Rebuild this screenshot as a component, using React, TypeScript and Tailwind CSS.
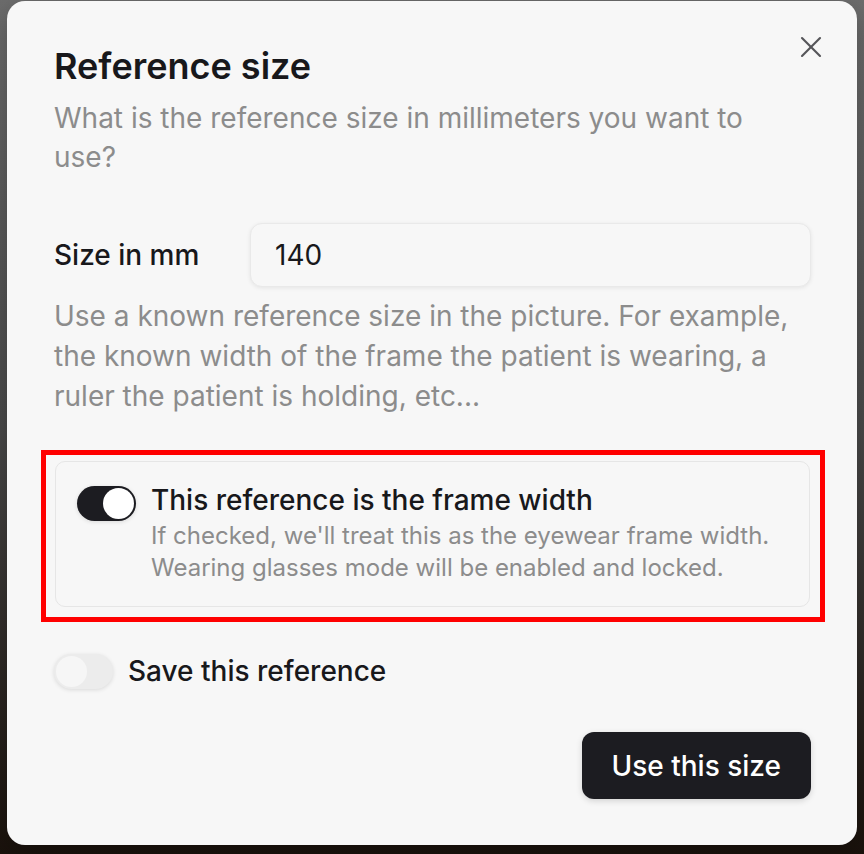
import { useState } from 'react'
import { X } from 'lucide-react'

const FONT = { fontFamily: 'Inter, "Noto Sans", sans-serif' }

function Toggle({ checked, onChange }: { checked: boolean; onChange: (v: boolean) => void }) {
  return (
    <button
      type="button"
      role="switch"
      aria-checked={checked}
      onClick={() => onChange(!checked)}
      className={`flex h-[35px] w-[59px] shrink-0 items-center rounded-full p-[2px] shadow-[0_1px_4px_rgba(0,0,0,0.12)] ${
        checked ? 'justify-end bg-[#1c1c21]' : 'justify-start bg-[#ececec]'
      }`}
    >
      <span
        className={`block h-[31px] w-[31px] rounded-full ${checked ? 'bg-white' : 'bg-[#f6f6f6]'}`}
      />
    </button>
  )
}

export default function App() {
  const [size, setSize] = useState('140')
  const [isFrame, setIsFrame] = useState(true)
  const [save, setSave] = useState(false)

  return (
    <div
      className="flex h-[854px] w-full items-start bg-gradient-to-b from-[#6d6d6d] via-[#4a4a4a] to-[#1a120c]"
      style={FONT}
    >
      <div className="relative ml-[7px] mt-[1px] flex h-[844px] w-[850px] flex-col rounded-[18px] bg-[#f7f7f7] pl-[47px] pr-[46px] pt-[47px] shadow-[0_8px_30px_rgba(0,0,0,0.25)]">
        <button
          type="button"
          aria-label="Close"
          className="absolute right-[28px] top-[28px] text-[#555559]"
        >
          <X className="h-[36px] w-[36px]" strokeWidth={1.4} />
        </button>

        <h2 className="text-[36px] font-semibold leading-[36px] text-[#18181b]">Reference size</h2>
        <p className="mt-[15px] pr-[20px] text-[28px] leading-[39px] text-[#8c8c8c]">
          What is the reference size in millimeters you want to use?
        </p>

        <div className="mt-[46px] flex items-center">
          <label className="w-[196px] shrink-0 text-[28px] font-medium text-[#18181b]">Size in mm</label>
          <input
            value={size}
            onChange={(e) => setSize(e.target.value)}
            className="h-[64px] w-[561px] rounded-[12px] border border-[#e9e9e9] bg-[#f7f7f7] px-[24px] text-[28px] text-[#18181b] shadow-[0_1px_4px_rgba(0,0,0,0.08)] outline-none"
          />
        </div>

        <p className="mt-[9px] text-[28px] leading-[40px] text-[#8c8c8c]">
          Use a known reference size in the picture. For example, the known width of the frame the patient is
          wearing, a ruler the patient is holding, etc...
        </p>

        <div className="-ml-[13px] mt-[34px] w-[784px] border-[5px] border-[#ff0000] pb-[10px] pl-[9px] pr-[10px] pt-[6px]">
          <div className="flex gap-[15px] rounded-[10px] border border-[#e6e6e6] bg-[#f7f7f7] pb-[22px] pl-[21px] pr-[20px] pt-[22px]">
            <div className="pt-[2px]">
              <Toggle checked={isFrame} onChange={setIsFrame} />
            </div>
            <div>
              <div className="text-[28px] font-medium leading-[32px] text-[#18181b]">
                This reference is the frame width
              </div>
              <p className="mt-[4px] text-[24px] leading-[32px] text-[#8c8c8c]">
                If checked, we'll treat this as the eyewear frame width. Wearing glasses mode will be enabled and
                locked.
              </p>
            </div>
          </div>
        </div>

        <div className="mt-[28px] flex items-center gap-[15px]">
          <Toggle checked={save} onChange={setSave} />
          <span className="text-[28px] font-medium text-[#18181b]">Save this reference</span>
        </div>

        <div className="mt-[40px] flex justify-end">
          <button
            type="button"
            className="h-[67px] rounded-[12px] bg-[#1c1c21] px-[30px] text-[28px] font-medium text-white shadow-[0_2px_6px_rgba(0,0,0,0.15)]"
          >
            Use this size
          </button>
        </div>
      </div>
    </div>
  )
}
